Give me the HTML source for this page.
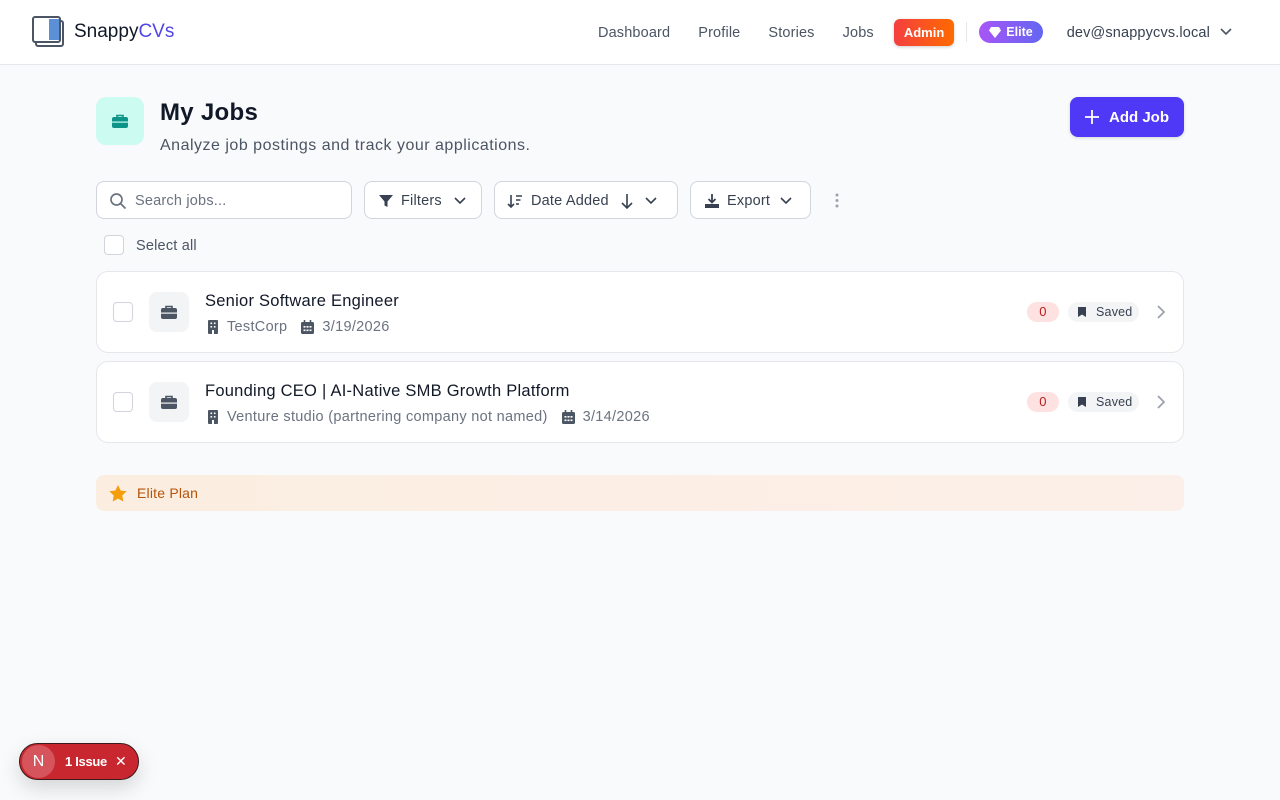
<!DOCTYPE html>
<html><head><meta charset="utf-8"><style>
*{box-sizing:border-box;margin:0;padding:0}
body{width:1280px;height:800px;background:#f8fafc;font-family:"Liberation Sans",sans-serif;color:#111827;position:relative;overflow:hidden;letter-spacing:.2px}
.hdr{height:65px;background:#fff;border-bottom:1px solid #e5e7eb;position:relative}
.logo{position:absolute;left:32px;top:16px;display:flex;align-items:center}
.logo span{font-size:19px;font-weight:500;margin-left:9px;color:#111827;letter-spacing:0}
.nav{position:absolute;top:0;right:48px;height:64px;display:flex;align-items:center;font-size:14.5px;color:#4b5563;letter-spacing:.15px}
.nav a{margin-left:28px;padding-top:1px}
.admin{background:linear-gradient(90deg,#f43f3f,#ff6a00);color:#fff;font-weight:700;font-size:13px;border-radius:6px;padding:6px 10px;margin-left:20px;box-shadow:0 1px 3px rgba(0,0,0,.2);letter-spacing:0}
.sep{width:1px;height:20px;background:#e5e7eb;margin:0 12px}
.elite{background:linear-gradient(90deg,#a855f7,#6366f1);color:#fff;font-weight:700;font-size:12.5px;border-radius:12px;padding:4px 10px 4px 10px;display:flex;align-items:center;gap:5px;letter-spacing:0}
.abs{position:absolute}
.btn{position:absolute;top:181px;height:38px;background:#fff;border:1px solid #d1d5db;border-radius:8px;display:flex;align-items:center;font-size:14.5px;color:#374151;padding:1px 12px 0;gap:8px}
.card{position:absolute;left:96px;width:1088px;height:82px;background:#fff;border:1px solid #e5e7eb;border-radius:12px}
.cb{position:absolute;width:20px;height:20px;border:1px solid #d1d5db;border-radius:4px;background:#fff}
.ic{position:absolute;left:52px;top:20px;width:40px;height:40px;border-radius:8px;background:#f3f4f6;display:flex;align-items:center;justify-content:center}
.t{position:absolute;left:108px;top:20px;font-size:16.5px;color:#111827;letter-spacing:.25px}
.m{position:absolute;left:110px;top:47px;font-size:14.5px;color:#6b7280;display:flex;align-items:center;gap:8px;letter-spacing:.3px}
.zero{position:absolute;right:124px;top:30px;width:32px;height:20px;border-radius:10px;background:#fee2e2;color:#b91c1c;font-size:13px;text-align:center;line-height:20px}
.saved{position:absolute;right:44px;top:30px;width:71px;height:20px;border-radius:10px;background:#f3f4f6;color:#374151;font-size:12.5px;line-height:20px;padding-left:28px}
.saved:before{content:"";position:absolute;left:10px;top:5px;width:8px;height:10px;background:#374151;clip-path:polygon(0 0,100% 0,100% 100%,50% 75%,0 100%)}
.chev{position:absolute;right:18px;top:33px}
</style></head><body>
<div class="hdr">
 <div class="logo"><svg width="33" height="32" viewBox="0 0 33 32"><rect x="4" y="5" width="27" height="25" rx="2" fill="none" stroke="#4b5563" stroke-width="2"/><rect x="1" y="1" width="27" height="25" rx="2" fill="#fff" stroke="#4b5563" stroke-width="2"/><rect x="17" y="3" width="10" height="21" fill="#5b8fd6"/></svg><span>Snappy<b style="font-weight:500;color:#4f46e5">CVs</b></span></div>
 <div class="nav"><a>Dashboard</a><a>Profile</a><a>Stories</a><a>Jobs</a><span class="admin">Admin</span><span class="sep"></span><span class="elite"><svg width="12" height="11" viewBox="0 0 12 11"><path d="M2 0h8l2 3.5L6 11 0 3.5z" fill="#fff"/></svg>Elite</span><span style="margin-left:24px;color:#374151;padding-top:1px">dev@snappycvs.local</span><svg style="margin-left:10px" width="12" height="8" viewBox="0 0 12 8"><path d="M1 1l5 5 5-5" fill="none" stroke="#4b5563" stroke-width="1.6"/></svg></div>
</div>
<div class="abs" style="left:96px;top:97px;width:48px;height:48px;border-radius:10px;background:#ccfbf1;display:flex;align-items:center;justify-content:center"><svg width="16" height="14" viewBox="0 0 16 14"><path d="M5 3V1.5h6V3" fill="none" stroke="#0d9488" stroke-width="1.6"/><rect x="0" y="3" width="16" height="11" rx="2" fill="#0d9488"/><rect x="0" y="7.5" width="16" height="1.2" fill="#ccfbf1"/></svg></div>
<div class="abs" style="left:160px;top:99px;font-size:24px;font-weight:700;color:#111827;letter-spacing:.3px">My Jobs</div>
<div class="abs" style="left:160px;top:137px;font-size:16px;color:#4b5563;letter-spacing:.5px">Analyze job postings and track your applications.</div>
<div class="abs" style="left:1070px;top:97px;width:114px;height:40px;background:#4f39f6;border-radius:8px;color:#fff;font-size:15px;font-weight:600;display:flex;align-items:center;justify-content:center;gap:10px;box-shadow:0 1px 3px rgba(0,0,0,.15);letter-spacing:0"><svg width="14" height="14" viewBox="0 0 14 14"><path d="M7 0v14M0 7h14" stroke="#fff" stroke-width="1.8"/></svg>Add Job</div>
<div class="btn" style="left:96px;width:256px;color:#6b7280"><svg width="18" height="18" viewBox="0 0 18 18"><circle cx="7.5" cy="7.5" r="5.5" fill="none" stroke="#6b7280" stroke-width="1.7"/><path d="M11.5 11.5l5 5" stroke="#6b7280" stroke-width="1.7"/></svg>Search jobs...</div>
<div class="btn" style="left:364px;width:118px;padding-left:14px"><svg width="14" height="14" viewBox="0 0 14 14"><path d="M0 1h14L8.5 7.5V13l-3-1.5V7.5z" fill="#374151"/></svg>Filters<svg style="margin-left:4px" width="12" height="8" viewBox="0 0 12 8"><path d="M1 1l5 5 5-5" fill="none" stroke="#374151" stroke-width="1.6"/></svg></div>
<div class="btn" style="left:494px;width:184px"><svg width="16" height="14" viewBox="0 0 16 14"><path d="M4 1v12M1 10l3 3 3-3M9 2h6M9 6h4.5M9 10h3" fill="none" stroke="#374151" stroke-width="1.6"/></svg>Date Added<svg style="margin-left:4px" width="12" height="16" viewBox="0 0 12 16"><path d="M6 1v14M1 10l5 5 5-5" fill="none" stroke="#374151" stroke-width="1.6"/></svg><svg style="margin-left:4px" width="12" height="8" viewBox="0 0 12 8"><path d="M1 1l5 5 5-5" fill="none" stroke="#374151" stroke-width="1.6"/></svg></div>
<div class="btn" style="left:690px;width:121px;padding-left:14px"><svg width="14" height="14" viewBox="0 0 14 14"><path d="M7 0v8M3.5 5L7 8.5 10.5 5" fill="none" stroke="#374151" stroke-width="1.8"/><path d="M0 10h14v4H0z" fill="#374151"/></svg>Export<svg style="margin-left:2px" width="12" height="8" viewBox="0 0 12 8"><path d="M1 1l5 5 5-5" fill="none" stroke="#374151" stroke-width="1.6"/></svg></div>
<svg class="abs" style="left:835px;top:193px" width="4" height="15" viewBox="0 0 4 15"><circle cx="2" cy="2" r="1.5" fill="#9ca3af"/><circle cx="2" cy="7.5" r="1.5" fill="#9ca3af"/><circle cx="2" cy="13" r="1.5" fill="#9ca3af"/></svg>
<div class="cb" style="left:104px;top:235px"></div>
<div class="abs" style="left:136px;top:238px;font-size:14.5px;color:#4b5563">Select all</div>

<div class="card" style="top:271px">
 <div class="cb" style="left:16px;top:30px"></div>
 <div class="ic"><svg width="16" height="14" viewBox="0 0 16 14"><path d="M5 3V1.5h6V3" fill="none" stroke="#4b5563" stroke-width="1.6"/><rect y="3" width="16" height="11" rx="2" fill="#4b5563"/><rect y="7.5" width="16" height="1.2" fill="#f3f4f6"/></svg></div>
 <div class="t">Senior Software Engineer</div>
 <div class="m"><svg width="12" height="14" viewBox="0 0 12 14"><rect x="1" width="10" height="14" rx="1" fill="#4b5563"/><g fill="#fff"><rect x="3.5" y="2.5" width="1.6" height="1.6"/><rect x="6.9" y="2.5" width="1.6" height="1.6"/><rect x="3.5" y="6" width="1.6" height="1.6"/><rect x="6.9" y="6" width="1.6" height="1.6"/><rect x="5" y="10" width="2" height="4"/></g></svg><span style="margin-right:6px">TestCorp</span><svg width="13" height="14" viewBox="0 0 13 14"><rect y="2" width="13" height="12" rx="1.5" fill="#4b5563"/><path d="M3.5 0v3M9.5 0v3" stroke="#4b5563" stroke-width="1.6"/><g fill="#fff"><rect x="2.5" y="6" width="2" height="1.6"/><rect x="5.5" y="6" width="2" height="1.6"/><rect x="8.5" y="6" width="2" height="1.6"/><rect x="2.5" y="9.5" width="2" height="1.6"/><rect x="5.5" y="9.5" width="2" height="1.6"/><rect x="8.5" y="9.5" width="2" height="1.6"/></g></svg><span>3/19/2026</span></div>
 <div class="zero">0</div><div class="saved">Saved</div>
 <svg class="chev" width="8" height="14" viewBox="0 0 8 14"><path d="M1 1l6 6-6 6" fill="none" stroke="#9ca3af" stroke-width="1.8"/></svg>
</div>
<div class="card" style="top:361px">
 <div class="cb" style="left:16px;top:30px"></div>
 <div class="ic"><svg width="16" height="14" viewBox="0 0 16 14"><path d="M5 3V1.5h6V3" fill="none" stroke="#4b5563" stroke-width="1.6"/><rect y="3" width="16" height="11" rx="2" fill="#4b5563"/><rect y="7.5" width="16" height="1.2" fill="#f3f4f6"/></svg></div>
 <div class="t">Founding CEO | AI-Native SMB Growth Platform</div>
 <div class="m"><svg width="12" height="14" viewBox="0 0 12 14"><rect x="1" width="10" height="14" rx="1" fill="#4b5563"/><g fill="#fff"><rect x="3.5" y="2.5" width="1.6" height="1.6"/><rect x="6.9" y="2.5" width="1.6" height="1.6"/><rect x="3.5" y="6" width="1.6" height="1.6"/><rect x="6.9" y="6" width="1.6" height="1.6"/><rect x="5" y="10" width="2" height="4"/></g></svg><span style="margin-right:6px">Venture studio (partnering company not named)</span><svg width="13" height="14" viewBox="0 0 13 14"><rect y="2" width="13" height="12" rx="1.5" fill="#4b5563"/><path d="M3.5 0v3M9.5 0v3" stroke="#4b5563" stroke-width="1.6"/><g fill="#fff"><rect x="2.5" y="6" width="2" height="1.6"/><rect x="5.5" y="6" width="2" height="1.6"/><rect x="8.5" y="6" width="2" height="1.6"/><rect x="2.5" y="9.5" width="2" height="1.6"/><rect x="5.5" y="9.5" width="2" height="1.6"/><rect x="8.5" y="9.5" width="2" height="1.6"/></g></svg><span>3/14/2026</span></div>
 <div class="zero">0</div><div class="saved">Saved</div>
 <svg class="chev" width="8" height="14" viewBox="0 0 8 14"><path d="M1 1l6 6-6 6" fill="none" stroke="#9ca3af" stroke-width="1.8"/></svg>
</div>

<div class="abs" style="left:96px;top:475px;width:1088px;height:36px;border-radius:8px;background:linear-gradient(90deg,#fbeee0,#fcefe9);display:flex;align-items:center;padding-left:13px;font-size:14px;color:#b45309;gap:10px"><svg width="18" height="17" viewBox="0 0 24 23"><path d="M12 0l3.6 7.4 8.1 1.1-5.9 5.7 1.4 8.1L12 18.5l-7.2 3.8 1.4-8.1L.3 8.5l8.1-1.1z" fill="#f59e0b"/></svg>Elite Plan</div>

<div class="abs" style="left:19px;top:743px;width:120px;height:37px;border-radius:19px;background:#c9272f;border:1px solid #3b1b1b;box-shadow:0 8px 20px rgba(0,0,0,.15);display:flex;align-items:center;color:#fff;font-size:13px;font-weight:700;letter-spacing:0">
 <div style="width:33px;height:33px;border-radius:50%;background:#d6545b;margin-left:2px;display:flex;align-items:center;justify-content:center;font-weight:400;font-size:16px">N</div>
 <span style="margin-left:10px;letter-spacing:-.3px">1 Issue</span><span style="margin-left:8px;font-weight:400;font-size:14px">✕</span>
</div>
</body></html>
